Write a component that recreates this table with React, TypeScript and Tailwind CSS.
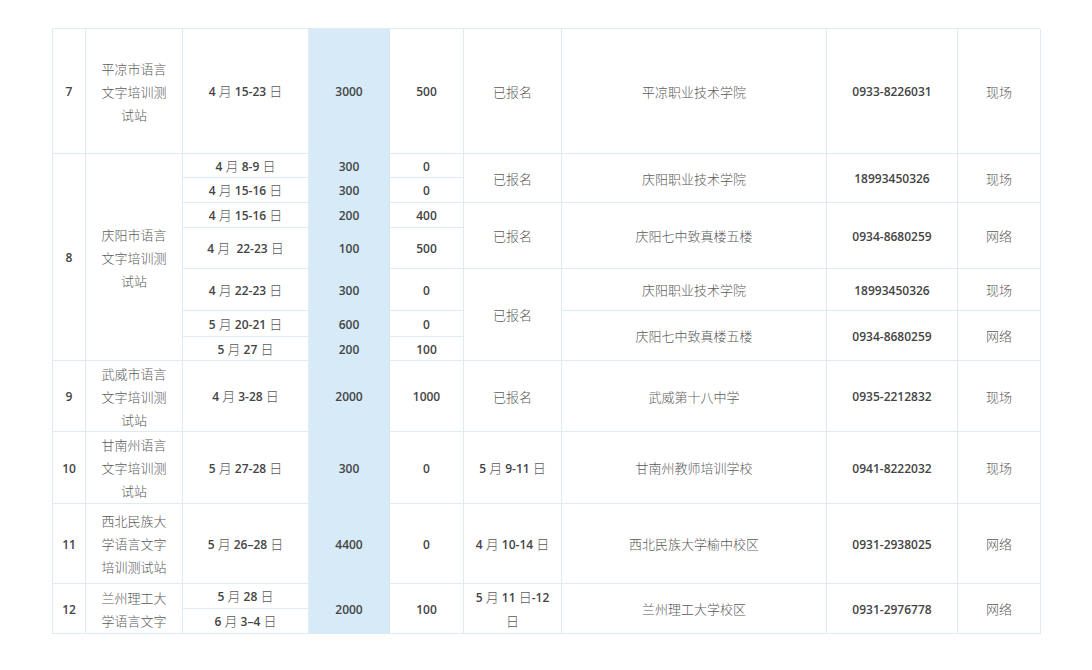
import React from "react";

type CellDef = {
  pos: string;
  lines: string[];
  blue?: boolean;
};

const cjkRe = /([\u4e00-\u9fff\u3000-\u303f]+)/;

const Mixed = ({ text }: { text: string }) => {
  const parts = text.split(cjkRe).filter((p) => p !== "");
  return (
    <>
      {parts.map((p, i) =>
        cjkRe.test(p) ? (
          <span key={i} className="font-['Noto_Sans_CJK_SC',sans-serif] text-[13px] font-light text-[#5a5a5a]">
            {p}
          </span>
        ) : (
          <span key={i} className="font-['Open_Sans','Liberation_Sans',sans-serif] text-[12px] font-semibold text-[#444]">
            {p}
          </span>
        )
      )}
    </>
  );
};

const cells: CellDef[] = [
  // row 7
  { pos: "col-start-1 row-start-1", lines: ["7"] },
  { pos: "col-start-2 row-start-1", lines: ["平凉市语言", "文字培训测", "试站"] },
  { pos: "col-start-3 row-start-1", lines: ["4 月 15-23 日"] },
  { pos: "col-start-4 row-start-1", lines: ["3000"], blue: true },
  { pos: "col-start-5 row-start-1", lines: ["500"] },
  { pos: "col-start-6 row-start-1", lines: ["已报名"] },
  { pos: "col-start-7 row-start-1", lines: ["平凉职业技术学院"] },
  { pos: "col-start-8 row-start-1", lines: ["0933-8226031"] },
  { pos: "col-start-9 row-start-1", lines: ["现场"] },

  // row 8
  { pos: "col-start-1 row-start-2 row-span-7", lines: ["8"] },
  { pos: "col-start-2 row-start-2 row-span-7", lines: ["庆阳市语言", "文字培训测", "试站"] },
  { pos: "col-start-3 row-start-2", lines: ["4 月 8-9 日"] },
  { pos: "col-start-3 row-start-3", lines: ["4 月 15-16 日"] },
  { pos: "col-start-3 row-start-4", lines: ["4 月 15-16 日"] },
  { pos: "col-start-3 row-start-5", lines: ["4 月  22-23 日"] },
  { pos: "col-start-3 row-start-6", lines: ["4 月 22-23 日"] },
  { pos: "col-start-3 row-start-7", lines: ["5 月 20-21 日"] },
  { pos: "col-start-3 row-start-8", lines: ["5 月 27 日"] },
  { pos: "col-start-4 row-start-2", lines: ["300"], blue: true },
  { pos: "col-start-4 row-start-3", lines: ["300"], blue: true },
  { pos: "col-start-4 row-start-4", lines: ["200"], blue: true },
  { pos: "col-start-4 row-start-5", lines: ["100"], blue: true },
  { pos: "col-start-4 row-start-6", lines: ["300"], blue: true },
  { pos: "col-start-4 row-start-7", lines: ["600"], blue: true },
  { pos: "col-start-4 row-start-8", lines: ["200"], blue: true },
  { pos: "col-start-5 row-start-2", lines: ["0"] },
  { pos: "col-start-5 row-start-3", lines: ["0"] },
  { pos: "col-start-5 row-start-4", lines: ["400"] },
  { pos: "col-start-5 row-start-5", lines: ["500"] },
  { pos: "col-start-5 row-start-6", lines: ["0"] },
  { pos: "col-start-5 row-start-7", lines: ["0"] },
  { pos: "col-start-5 row-start-8", lines: ["100"] },
  { pos: "col-start-6 row-start-2 row-span-2", lines: ["已报名"] },
  { pos: "col-start-6 row-start-4 row-span-2", lines: ["已报名"] },
  { pos: "col-start-6 row-start-6 row-span-3", lines: ["已报名"] },
  { pos: "col-start-7 row-start-2 row-span-2", lines: ["庆阳职业技术学院"] },
  { pos: "col-start-7 row-start-4 row-span-2", lines: ["庆阳七中致真楼五楼"] },
  { pos: "col-start-7 row-start-6", lines: ["庆阳职业技术学院"] },
  { pos: "col-start-7 row-start-7 row-span-2", lines: ["庆阳七中致真楼五楼"] },
  { pos: "col-start-8 row-start-2 row-span-2", lines: ["18993450326"] },
  { pos: "col-start-8 row-start-4 row-span-2", lines: ["0934-8680259"] },
  { pos: "col-start-8 row-start-6", lines: ["18993450326"] },
  { pos: "col-start-8 row-start-7 row-span-2", lines: ["0934-8680259"] },
  { pos: "col-start-9 row-start-2 row-span-2", lines: ["现场"] },
  { pos: "col-start-9 row-start-4 row-span-2", lines: ["网络"] },
  { pos: "col-start-9 row-start-6", lines: ["现场"] },
  { pos: "col-start-9 row-start-7 row-span-2", lines: ["网络"] },

  // row 9
  { pos: "col-start-1 row-start-9", lines: ["9"] },
  { pos: "col-start-2 row-start-9", lines: ["武威市语言", "文字培训测", "试站"] },
  { pos: "col-start-3 row-start-9", lines: ["4 月 3-28 日"] },
  { pos: "col-start-4 row-start-9", lines: ["2000"], blue: true },
  { pos: "col-start-5 row-start-9", lines: ["1000"] },
  { pos: "col-start-6 row-start-9", lines: ["已报名"] },
  { pos: "col-start-7 row-start-9", lines: ["武威第十八中学"] },
  { pos: "col-start-8 row-start-9", lines: ["0935-2212832"] },
  { pos: "col-start-9 row-start-9", lines: ["现场"] },

  // row 10
  { pos: "col-start-1 row-start-10", lines: ["10"] },
  { pos: "col-start-2 row-start-10", lines: ["甘南州语言", "文字培训测", "试站"] },
  { pos: "col-start-3 row-start-10", lines: ["5 月 27-28 日"] },
  { pos: "col-start-4 row-start-10", lines: ["300"], blue: true },
  { pos: "col-start-5 row-start-10", lines: ["0"] },
  { pos: "col-start-6 row-start-10", lines: ["5 月 9-11 日"] },
  { pos: "col-start-7 row-start-10", lines: ["甘南州教师培训学校"] },
  { pos: "col-start-8 row-start-10", lines: ["0941-8222032"] },
  { pos: "col-start-9 row-start-10", lines: ["现场"] },

  // row 11
  { pos: "col-start-1 row-start-11", lines: ["11"] },
  { pos: "col-start-2 row-start-11", lines: ["西北民族大", "学语言文字", "培训测试站"] },
  { pos: "col-start-3 row-start-11", lines: ["5 月 26–28 日"] },
  { pos: "col-start-4 row-start-11", lines: ["4400"], blue: true },
  { pos: "col-start-5 row-start-11", lines: ["0"] },
  { pos: "col-start-6 row-start-11", lines: ["4 月 10-14 日"] },
  { pos: "col-start-7 row-start-11", lines: ["西北民族大学榆中校区"] },
  { pos: "col-start-8 row-start-11", lines: ["0931-2938025"] },
  { pos: "col-start-9 row-start-11", lines: ["网络"] },

  // row 12
  { pos: "col-start-1 row-start-12 row-span-2", lines: ["12"] },
  { pos: "col-start-2 row-start-12 row-span-2", lines: ["兰州理工大", "学语言文字"] },
  { pos: "col-start-3 row-start-12", lines: ["5 月 28 日"] },
  { pos: "col-start-3 row-start-13", lines: ["6 月 3–4 日"] },
  { pos: "col-start-4 row-start-12 row-span-2", lines: ["2000"], blue: true },
  { pos: "col-start-5 row-start-12 row-span-2", lines: ["100"] },
  { pos: "col-start-6 row-start-12 row-span-2", lines: ["5 月 11 日-12", "日"] },
  { pos: "col-start-7 row-start-12 row-span-2", lines: ["兰州理工大学校区"] },
  { pos: "col-start-8 row-start-12 row-span-2", lines: ["0931-2976778"] },
  { pos: "col-start-9 row-start-12 row-span-2", lines: ["网络"] },
];

export default function App() {
  return (
    <div className="w-[1092px] h-[670px] bg-white pt-[28px] pl-[52px] overflow-hidden">
      <div className="grid grid-cols-[33px_97px_126px_81px_74px_98px_265px_131px_83px] grid-rows-[125px_24px_25px_25px_41px_42px_26px_24px_71px_72px_80px_25px_25px] w-[988px] border-l border-t border-[#dfebf4]">
        {cells.map((c, i) => (
          <div
            key={i}
            className={
              c.pos +
              (c.blue
                ? " bg-[#d6eaf8] border-r border-b border-r-[#d3e4ef] border-b-[#d6eaf8]"
                : " bg-white border-r border-b border-[#dfebf4]") +
              " flex flex-col items-center justify-center text-center leading-[23px] whitespace-pre"
            }
          >
            {c.lines.map((l, j) => (
              <div key={j}>
                <Mixed text={l} />
              </div>
            ))}
          </div>
        ))}
      </div>
    </div>
  );
}
